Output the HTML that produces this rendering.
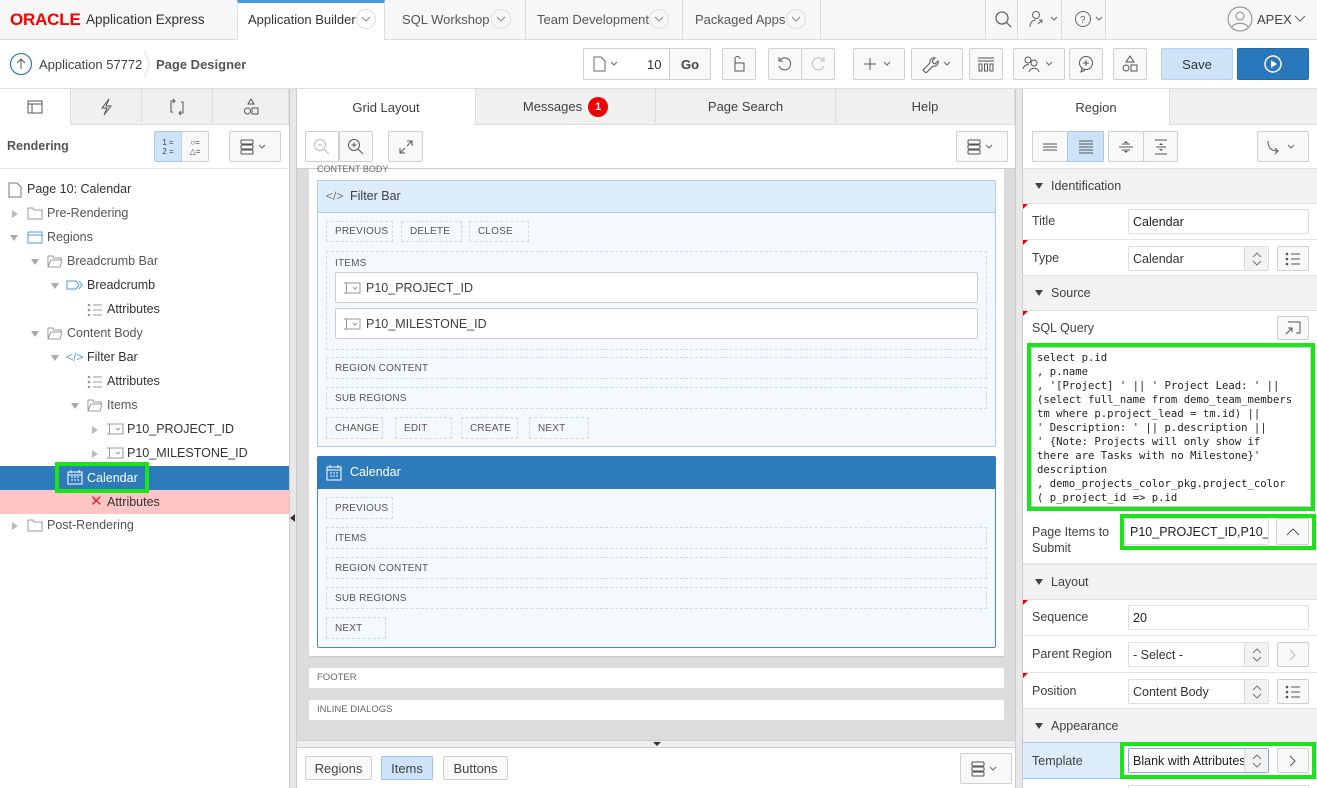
<!DOCTYPE html>
<html style="width:1317px;height:788px;overflow:hidden"><head><meta charset="utf-8"><style>
*{box-sizing:border-box;margin:0;padding:0}
body{width:1317px;height:788px;overflow:hidden;font-family:"Liberation Sans",sans-serif;font-size:13px;color:#404040;background:#fff;position:relative}
.a{position:absolute}
.btn{position:absolute;border:1px solid #d0d0d0;border-radius:2px;background:#f8f8f8;display:flex;align-items:center;justify-content:center;color:#444}
.tab{position:absolute;top:89px;height:36px;background:#f0f0f0;border-right:1px solid #ddd;border-bottom:1px solid #ddd;display:flex;align-items:center;justify-content:center;font-size:13px;color:#404040}
.tree{position:absolute;font-size:12.5px;color:#404040;height:24px;line-height:24px;white-space:nowrap}
.tri{position:absolute;width:0;height:0}
.dn{border-left:4px solid transparent;border-right:4px solid transparent;border-top:6px solid #aaa}
.rt{border-top:4px solid transparent;border-bottom:4px solid transparent;border-left:6px solid #bbb}
.dash{position:absolute;border:1px dashed #c6dcef;font-size:10px;color:#555;padding-left:8px;display:flex;align-items:center;letter-spacing:.2px}
.sec{position:absolute;left:1023px;width:294px;height:36px;background:#f2f2f2;border-bottom:1px solid #e0e0e0;border-top:1px solid #e0e0e0;font-size:12.5px;color:#404040;line-height:34px;padding-left:28px}
.sec:before{content:"";position:absolute;left:12px;top:14px;border-left:4px solid transparent;border-right:4px solid transparent;border-top:6px solid #444}
.lbl{position:absolute;left:1032px;font-size:12.5px;color:#404040}
.inp{position:absolute;border:1px solid #ddd;border-radius:2px;background:#fff;font-size:12.5px;color:#222;padding-left:4px;display:flex;align-items:center;overflow:hidden;white-space:nowrap}
.row{position:absolute;left:1023px;width:294px;border-bottom:1px solid #e4e4e4}
.req{position:absolute;left:1023px;width:0;height:0;border-top:5px solid #e00;border-right:5px solid transparent}
.spin{position:absolute;right:0;top:0;bottom:0;width:24px;border-left:1px solid #ddd;background:#f2f2f2;display:flex;align-items:center;justify-content:center}
.chev{position:absolute;top:9px;width:20px;height:20px;border:1px solid #ddd;border-radius:50%;display:flex;align-items:center;justify-content:center}
</style></head><body>
<!-- top nav -->
<div class="a" style="left:0;top:0;width:1317px;height:40px;background:#f7f7f7;border-bottom:1px solid #ddd"></div>
<div class="a" style="left:10px;top:10px;font-size:17px;font-weight:bold;color:#f80000;letter-spacing:-0.2px">ORACLE</div>
<div class="a" style="left:84px;top:12px;font-size:13.5px;color:#333;padding-left:2px">Application Express</div>
<div class="a" style="left:237px;top:0;width:148px;height:40px;background:#fff;border-top:3px solid #4a9bdc;border-left:1px solid #ddd;border-right:1px solid #ddd"></div>
<div class="a" style="left:248px;top:12px;font-size:13px;color:#333">Application Builder</div>
<div class="chev" style="left:356px"><svg width="10" height="6"><path d="M1 1l4 4 4-4" stroke="#888" fill="none"/></svg></div>
<div class="a" style="left:402px;top:12px;color:#555">SQL Workshop</div>
<div class="chev" style="left:491px"><svg width="10" height="6"><path d="M1 1l4 4 4-4" stroke="#888" fill="none"/></svg></div>
<div class="a" style="left:525px;top:0;width:1px;height:40px;background:#ddd"></div>
<div class="a" style="left:537px;top:12px;color:#555">Team Development</div>
<div class="chev" style="left:649px"><svg width="10" height="6"><path d="M1 1l4 4 4-4" stroke="#888" fill="none"/></svg></div>
<div class="a" style="left:682px;top:0;width:1px;height:40px;background:#ddd"></div>
<div class="a" style="left:695px;top:12px;color:#555">Packaged Apps</div>
<div class="chev" style="left:786px"><svg width="10" height="6"><path d="M1 1l4 4 4-4" stroke="#888" fill="none"/></svg></div>
<div class="a" style="left:820px;top:0;width:1px;height:40px;background:#ddd"></div>
<div class="a" style="left:985px;top:0;width:1px;height:40px;background:#ddd"></div>
<div class="a" style="left:1017px;top:0;width:1px;height:40px;background:#ddd"></div>
<div class="a" style="left:1061px;top:0;width:1px;height:40px;background:#ddd"></div>
<div class="a" style="left:1105px;top:0;width:1px;height:40px;background:#ddd"></div>
<svg class="a" style="left:994px;top:10px" width="20" height="20"><circle cx="8" cy="8" r="6" fill="none" stroke="#666" stroke-width="1.3"/><path d="M12 12l5 5" stroke="#666" stroke-width="1.3"/></svg>
<svg class="a" style="left:1029px;top:10px" width="32" height="20"><circle cx="7" cy="5" r="3.5" fill="none" stroke="#666"/><path d="M1 17c0-5 3-7 6-7M9 14l4-4M10 10h3v3" stroke="#666" fill="none"/><path d="M22 7l3 3 3-3" stroke="#666" fill="none"/></svg>
<svg class="a" style="left:1074px;top:10px" width="32" height="20"><circle cx="9" cy="9" r="7.5" fill="none" stroke="#666"/><text x="6" y="13" font-size="10" fill="#666" font-family="Liberation Sans">?</text><path d="M22 7l3 3 3-3" stroke="#666" fill="none"/></svg>
<svg class="a" style="left:1227px;top:6px" width="26" height="26"><circle cx="13" cy="13" r="12" fill="none" stroke="#888"/><circle cx="13" cy="10" r="4" fill="none" stroke="#888"/><path d="M5 21c2-5 14-5 16 0" fill="none" stroke="#888"/></svg>
<div class="a" style="left:1257px;top:12px;color:#444">APEX</div>
<svg class="a" style="left:1294px;top:15px" width="12" height="8"><path d="M1 1l5 5 5-5" stroke="#666" fill="none"/></svg>

<!-- toolbar row -->
<div class="a" style="left:0;top:88px;width:1317px;height:1px;background:#ddd"></div>
<svg class="a" style="left:9px;top:52px" width="24" height="24"><circle cx="12" cy="12" r="10.5" fill="none" stroke="#2f7bbf" stroke-width="1.2"/><path d="M12 17V7M8 11l4-4 4 4" stroke="#555" fill="none"/></svg>
<div class="a" style="left:39px;top:57px;color:#404040">Application 57772</div>
<svg class="a" style="left:142px;top:50px" width="10" height="28"><path d="M2 1l6 13-6 13" stroke="#ddd" fill="none"/></svg>
<div class="a" style="left:156px;top:57px;color:#555;font-weight:bold">Page Designer</div>
<div class="btn" style="left:583px;top:48px;width:128px;height:32px;justify-content:flex-start;background:#fff"></div>
<svg class="a" style="left:592px;top:56px" width="30" height="16"><path d="M2 1h7l4 4v10H2z" fill="none" stroke="#666"/><path d="M19 6l3 3 3-3" stroke="#666" fill="none"/></svg>
<div class="a" style="left:647px;top:57px;color:#333">10</div>
<div class="btn" style="left:669px;top:48px;width:42px;height:32px;font-weight:bold;background:#f8f8f8">Go</div>
<div class="btn" style="left:722px;top:48px;width:34px;height:32px"><svg width="16" height="18"><rect x="4" y="8" width="9" height="8" fill="none" stroke="#555"/><path d="M4 8V4a2.5 2.5 0 015 0" fill="none" stroke="#555"/></svg></div>
<div class="btn" style="left:768px;top:48px;width:34px;height:32px"><svg width="18" height="18"><path d="M4 5a6 6 0 11-1 6" fill="none" stroke="#555"/><path d="M3 2v4h4" fill="none" stroke="#555"/></svg></div>
<div class="btn" style="left:801px;top:48px;width:34px;height:32px"><svg width="18" height="18"><path d="M14 5a6 6 0 101 6" fill="none" stroke="#bbb"/><path d="M15 2v4h-4" fill="none" stroke="#bbb"/></svg></div>
<div class="btn" style="left:853px;top:48px;width:52px;height:32px"><svg width="34" height="16"><path d="M8 2v12M2 8h12" stroke="#555"/><path d="M22 6l3 3 3-3" stroke="#666" fill="none"/></svg></div>
<div class="btn" style="left:911px;top:48px;width:52px;height:32px"><svg width="34" height="18"><path d="M3 15l7-7a4 4 0 015-5l-3 3 1 2 2 1 3-3a4 4 0 01-5 5l-7 7z" fill="none" stroke="#555"/><path d="M24 7l3 3 3-3" stroke="#666" fill="none"/></svg></div>
<div class="btn" style="left:969px;top:48px;width:34px;height:32px"><svg width="18" height="16"><path d="M1 2h16M1 5h16" stroke="#555"/><rect x="2" y="8" width="3" height="7" fill="none" stroke="#555"/><rect x="7.5" y="8" width="3" height="7" fill="none" stroke="#555"/><rect x="13" y="8" width="3" height="7" fill="none" stroke="#555"/></svg></div>
<div class="btn" style="left:1013px;top:48px;width:52px;height:32px"><svg width="34" height="18"><circle cx="6" cy="5" r="3" fill="none" stroke="#555"/><circle cx="12" cy="8" r="3" fill="none" stroke="#555"/><path d="M1 14c1-4 5-5 6-4M7 17c1-5 9-5 10 0" fill="none" stroke="#555"/><path d="M24 7l3 3 3-3" stroke="#666" fill="none"/></svg></div>
<div class="btn" style="left:1069px;top:48px;width:34px;height:32px"><svg width="18" height="18"><circle cx="9" cy="8" r="6.5" fill="none" stroke="#555"/><path d="M9 5v6M6 8h6M5 13l-1 4 4-2" fill="none" stroke="#555"/></svg></div>
<div class="btn" style="left:1113px;top:48px;width:34px;height:32px"><svg width="18" height="18"><path d="M9 1l4 6H5z" fill="none" stroke="#555"/><circle cx="5" cy="13" r="3" fill="none" stroke="#555"/><rect x="10" y="10" width="6" height="6" fill="none" stroke="#555"/></svg></div>
<div class="btn" style="left:1161px;top:48px;width:72px;height:32px;background:#cde3f7;border-color:#b5d2ee;color:#333">Save</div>
<div class="btn" style="left:1237px;top:48px;width:72px;height:32px;background:#2a78bc;border-color:#2568a6"><svg width="20" height="20"><circle cx="10" cy="10" r="8" fill="none" stroke="#fff" stroke-width="1.5"/><path d="M8 6l6 4-6 4z" fill="#fff"/></svg></div>

<!-- splitters -->
<div class="a" style="left:289px;top:89px;width:8px;height:699px;background:#e8e8e8;border-left:1px solid #ccc;border-right:1px solid #ccc"></div>
<div class="a" style="left:290px;top:514px;border-top:4px solid transparent;border-bottom:4px solid transparent;border-right:5px solid #333"></div>
<div class="a" style="left:1015px;top:89px;width:8px;height:699px;background:#e8e8e8;border-left:1px solid #ccc;border-right:1px solid #ccc"></div>

<!-- left panel -->
<div class="tab" style="left:0;width:71px;background:#fff;border-bottom:none"><svg width="16" height="14"><rect x="1" y="1" width="14" height="12" fill="none" stroke="#555"/><path d="M1 4h14M5 4v9" stroke="#555"/></svg></div>
<div class="tab" style="left:71px;width:71px"><svg width="14" height="18"><path d="M10 1L3 10h5l-3 7 7-9H7z" fill="none" stroke="#555"/></svg></div>
<div class="tab" style="left:142px;width:71px"><svg width="18" height="18"><path d="M6 3H3v11h2M12 15h3V4h-2" fill="none" stroke="#555"/><path d="M5 1l2 2-2 2M13 13l-2 2 2 2" fill="none" stroke="#555"/></svg></div>
<div class="tab" style="left:213px;width:76px"><svg width="16" height="18"><path d="M8 1l3 5H5z" fill="none" stroke="#555"/><circle cx="4.5" cy="13" r="3" fill="none" stroke="#555"/><rect x="9" y="10" width="6" height="6" fill="none" stroke="#555"/></svg></div>
<div class="a" style="left:7px;top:139px;font-weight:bold;color:#555;font-size:12.5px">Rendering</div>
<div class="btn" style="left:154px;top:131px;width:28px;height:31px;background:#cde3f7;border-color:#a9c9ea;border-radius:2px 0 0 2px;font-size:8px;line-height:9px;text-align:center">1 =<br>2 =</div>
<div class="btn" style="left:181px;top:131px;width:28px;height:31px;font-size:8px;line-height:9px;text-align:center">○=<br>△=</div>
<div class="btn" style="left:229px;top:131px;width:52px;height:31px"><svg width="34" height="16"><rect x="3" y="1" width="12" height="4" rx="1" fill="none" stroke="#555"/><rect x="3" y="6" width="12" height="4" rx="1" fill="none" stroke="#555"/><rect x="3" y="11" width="12" height="4" rx="1" fill="none" stroke="#555"/><path d="M21 6l3 3 3-3" stroke="#666" fill="none"/></svg></div>
<div class="a" style="left:0;top:168px;width:289px;height:1px;background:#e6e6e6"></div>

<div class="a" style="left:0;top:466px;width:289px;height:24px;background:#2e7bbc"></div>
<div class="a" style="left:0;top:490px;width:289px;height:24px;background:#ffc4c4"></div>

<svg class="a" style="left:8px;top:182px" width="14" height="16"><path d="M1 1h8l4 4v10H1z" fill="none" stroke="#777"/></svg>
<div class="tree" style="left:27px;top:177px;color:#333">Page 10: Calendar</div>
<div class="tri rt" style="left:12px;top:210px"></div>
<svg class="a" style="left:27px;top:207px" width="16" height="13"><path d="M1 1h5l1 2h8v9H1z" fill="none" stroke="#999"/></svg>
<div class="tree" style="left:47px;top:201px;color:#555">Pre-Rendering</div>
<div class="tri dn" style="left:10px;top:235px"></div>
<svg class="a" style="left:27px;top:231px" width="16" height="13"><rect x="1" y="1" width="14" height="11" fill="none" stroke="#4a9bdc"/><path d="M1 4h14" stroke="#4a9bdc"/></svg>
<div class="tree" style="left:47px;top:225px;color:#555">Regions</div>
<div class="tri dn" style="left:31px;top:259px"></div>
<svg class="a" style="left:47px;top:255px" width="16" height="13"><path d="M1 1h5l1 2h7v2M1 1v11h12l2-7H4l-3 7" fill="none" stroke="#999"/></svg>
<div class="tree" style="left:67px;top:249px;color:#555">Breadcrumb Bar</div>
<div class="tri dn" style="left:51px;top:283px"></div>
<svg class="a" style="left:66px;top:280px" width="18" height="10"><path d="M1 1h9l3 4-3 4H1z" fill="none" stroke="#4a9bdc"/><path d="M13 1l3 4-3 4" fill="none" stroke="#4a9bdc"/></svg>
<div class="tree" style="left:87px;top:273px;color:#333">Breadcrumb</div>
<svg class="a" style="left:87px;top:303px" width="16" height="14"><circle cx="2" cy="2" r="1.3" fill="#999"/><circle cx="2" cy="7" r="1.3" fill="#999"/><circle cx="2" cy="12" r="1.3" fill="#999"/><path d="M6 2h9M6 7h9M6 12h9" stroke="#999"/></svg>
<div class="tree" style="left:107px;top:297px;color:#333">Attributes</div>
<div class="tri dn" style="left:31px;top:331px"></div>
<svg class="a" style="left:47px;top:327px" width="16" height="13"><path d="M1 1h5l1 2h7v2M1 1v11h12l2-7H4l-3 7" fill="none" stroke="#999"/></svg>
<div class="tree" style="left:67px;top:321px;color:#555">Content Body</div>
<div class="tri dn" style="left:51px;top:355px"></div>
<div class="tree" style="left:66px;top:345px;color:#4a9bdc;font-size:12px">&lt;/&gt;</div>
<div class="tree" style="left:87px;top:345px;color:#333">Filter Bar</div>
<svg class="a" style="left:87px;top:375px" width="16" height="14"><circle cx="2" cy="2" r="1.3" fill="#999"/><circle cx="2" cy="7" r="1.3" fill="#999"/><circle cx="2" cy="12" r="1.3" fill="#999"/><path d="M6 2h9M6 7h9M6 12h9" stroke="#999"/></svg>
<div class="tree" style="left:107px;top:369px;color:#333">Attributes</div>
<div class="tri dn" style="left:71px;top:403px"></div>
<svg class="a" style="left:87px;top:399px" width="16" height="13"><path d="M1 1h5l1 2h7v2M1 1v11h12l2-7H4l-3 7" fill="none" stroke="#999"/></svg>
<div class="tree" style="left:107px;top:393px;color:#555">Items</div>
<div class="tri rt" style="left:92px;top:426px"></div>
<svg class="a" style="left:106px;top:423px" width="18" height="12"><path d="M1 1h5M3.5 1v10M1 11h5M6 1h11v10H6" fill="none" stroke="#999"/><path d="M10 5l2 2 2-2" fill="none" stroke="#999"/></svg>
<div class="tree" style="left:127px;top:417px;color:#333">P10_PROJECT_ID</div>
<div class="tri rt" style="left:92px;top:450px"></div>
<svg class="a" style="left:106px;top:447px" width="18" height="12"><path d="M1 1h5M3.5 1v10M1 11h5M6 1h11v10H6" fill="none" stroke="#999"/><path d="M10 5l2 2 2-2" fill="none" stroke="#999"/></svg>
<div class="tree" style="left:127px;top:441px;color:#333">P10_MILESTONE_ID</div>
<div class="a" style="left:55px;top:462px;width:94px;height:31px;border:4px solid #1de31d"></div>
<svg class="a" style="left:67px;top:469px" width="16" height="16"><rect x="1" y="3" width="14" height="12" fill="none" stroke="#fff"/><path d="M1 6h14M4 1v3M12 1v3" stroke="#fff"/><path d="M4 8h2M7 8h2M10 8h2M4 11h2M7 11h2M10 11h2" stroke="#fff"/></svg>
<div class="tree" style="left:87px;top:466px;color:#fff">Calendar</div>
<div class="tree" style="left:90px;top:490px;color:#e22;font-size:15px">✕</div>
<div class="tree" style="left:107px;top:490px;color:#333">Attributes</div>
<div class="tri rt" style="left:12px;top:522px"></div>
<svg class="a" style="left:27px;top:519px" width="16" height="13"><path d="M1 1h5l1 2h8v9H1z" fill="none" stroke="#999"/></svg>
<div class="tree" style="left:47px;top:513px;color:#555">Post-Rendering</div>

<!-- center -->
<div class="tab" style="left:297px;width:179px;background:#fff;border-bottom:none">Grid Layout</div>
<div class="tab" style="left:476px;width:180px">Messages<span style="display:inline-block;margin-left:6px;width:20px;height:20px;border-radius:50%;background:#e00;color:#fff;font-size:11px;font-weight:bold;text-align:center;line-height:20px">1</span></div>
<div class="tab" style="left:656px;width:180px">Page Search</div>
<div class="tab" style="left:836px;width:179px">Help</div>
<div class="btn" style="left:305px;top:131px;width:34px;height:31px;background:#fff"><svg width="18" height="18"><circle cx="7" cy="7" r="5.5" fill="none" stroke="#bbb"/><path d="M11 11l5 5M4.5 7h5" stroke="#bbb"/></svg></div>
<div class="btn" style="left:339px;top:131px;width:34px;height:31px"><svg width="18" height="18"><circle cx="7" cy="7" r="5.5" fill="none" stroke="#555"/><path d="M11 11l5 5M4.5 7h5M7 4.5v5" stroke="#555"/></svg></div>
<div class="btn" style="left:388px;top:131px;width:35px;height:31px"><svg width="16" height="16"><path d="M2 14l5-5M2 9v5h5M14 2l-5 5M9 2h5v5" fill="none" stroke="#555"/></svg></div>
<div class="btn" style="left:956px;top:131px;width:52px;height:31px"><svg width="34" height="16"><rect x="3" y="1" width="12" height="4" rx="1" fill="none" stroke="#555"/><rect x="3" y="6" width="12" height="4" rx="1" fill="none" stroke="#555"/><rect x="3" y="11" width="12" height="4" rx="1" fill="none" stroke="#555"/><path d="M21 6l3 3 3-3" stroke="#666" fill="none"/></svg></div>

<div class="a" style="left:297px;top:168px;width:718px;height:572px;background:#dcdcdc;border-top:1px solid #ccc"></div>
<div class="a" style="left:309px;top:169px;width:695px;height:487px;background:#fff;border-radius:0 0 2px 2px;box-shadow:0 1px 1px rgba(0,0,0,.1)"></div>
<div class="a" style="left:317px;top:164px;font-size:9px;color:#666">CONTENT BODY</div>
<div class="a" style="left:317px;top:180px;width:679px;height:267px;background:#f5f9fd;border:1px solid #a9cdee;border-radius:2px"></div>
<div class="a" style="left:318px;top:181px;width:677px;height:32px;background:#ddecf9;border-bottom:1px solid #a9cdee"></div>
<div class="a" style="left:326px;top:189px;font-size:12px;color:#777">&lt;/&gt;</div>
<div class="a" style="left:350px;top:189px;font-size:12.5px;color:#404040">Filter Bar</div>
<div class="dash" style="left:326px;top:221px;width:67px;height:21px">PREVIOUS</div>
<div class="dash" style="left:401px;top:221px;width:61px;height:21px">DELETE</div>
<div class="dash" style="left:469px;top:221px;width:60px;height:21px">CLOSE</div>
<div class="dash" style="left:326px;top:251px;width:661px;height:99px;align-items:flex-start;padding-top:6px">ITEMS</div>
<div class="a" style="left:335px;top:272px;width:643px;height:31px;background:#fff;border:1px solid #ccc;border-radius:2px"></div>
<div class="a" style="left:335px;top:308px;width:643px;height:31px;background:#fff;border:1px solid #ccc;border-radius:2px"></div>
<svg class="a" style="left:343px;top:282px" width="18" height="12"><path d="M1 1h5M3.5 1v10M1 11h5M6 1h11v10H6" fill="none" stroke="#999"/><path d="M10 5l2 2 2-2" fill="none" stroke="#999"/></svg>
<div class="a" style="left:366px;top:281px;font-size:12.5px;color:#404040">P10_PROJECT_ID</div>
<svg class="a" style="left:343px;top:318px" width="18" height="12"><path d="M1 1h5M3.5 1v10M1 11h5M6 1h11v10H6" fill="none" stroke="#999"/><path d="M10 5l2 2 2-2" fill="none" stroke="#999"/></svg>
<div class="a" style="left:366px;top:317px;font-size:12.5px;color:#404040">P10_MILESTONE_ID</div>
<div class="dash" style="left:326px;top:357px;width:661px;height:22px">REGION CONTENT</div>
<div class="dash" style="left:326px;top:387px;width:661px;height:22px">SUB REGIONS</div>
<div class="dash" style="left:326px;top:417px;width:57px;height:22px">CHANGE</div>
<div class="dash" style="left:395px;top:417px;width:57px;height:22px">EDIT</div>
<div class="dash" style="left:461px;top:417px;width:57px;height:22px">CREATE</div>
<div class="dash" style="left:529px;top:417px;width:60px;height:22px">NEXT</div>

<div class="a" style="left:317px;top:456px;width:679px;height:192px;background:#f5f9fd;border:1px solid #3f8ad0;border-radius:2px"></div>
<div class="a" style="left:317px;top:456px;width:679px;height:33px;background:#2e7bbc;border-radius:2px 2px 0 0"></div>
<svg class="a" style="left:326px;top:464px" width="16" height="17"><rect x="1" y="3" width="14" height="13" fill="none" stroke="#fff"/><path d="M1 6h14M4 1v3M12 1v3" stroke="#fff"/><path d="M4 9h2M7 9h2M10 9h2M4 12h2M7 12h2M10 12h2" stroke="#fff"/></svg>
<div class="a" style="left:350px;top:465px;font-size:12.5px;color:#fff">Calendar</div>
<div class="dash" style="left:326px;top:497px;width:67px;height:22px">PREVIOUS</div>
<div class="dash" style="left:326px;top:527px;width:661px;height:22px">ITEMS</div>
<div class="dash" style="left:326px;top:557px;width:661px;height:22px">REGION CONTENT</div>
<div class="dash" style="left:326px;top:587px;width:661px;height:22px">SUB REGIONS</div>
<div class="dash" style="left:326px;top:617px;width:60px;height:22px">NEXT</div>

<div class="a" style="left:309px;top:668px;width:695px;height:20px;background:#fff;border-radius:2px;font-size:9.5px;color:#666;padding-left:8px;line-height:20px">FOOTER</div>
<div class="a" style="left:309px;top:700px;width:695px;height:20px;background:#fff;border-radius:2px;font-size:9.5px;color:#666;padding-left:8px;line-height:20px">INLINE DIALOGS</div>
<div class="a" style="left:297px;top:740px;width:718px;height:8px;background:#eee;border-top:1px solid #ccc;border-bottom:1px solid #ccc"></div>
<div class="a" style="left:653px;top:742px;border-left:4px solid transparent;border-right:4px solid transparent;border-top:4px solid #333"></div>
<div class="btn" style="left:305px;top:756px;width:67px;height:24px">Regions</div>
<div class="btn" style="left:381px;top:756px;width:52px;height:24px;background:#cde3f7;border-color:#9fc3e6">Items</div>
<div class="btn" style="left:443px;top:756px;width:65px;height:24px">Buttons</div>
<div class="btn" style="left:960px;top:753px;width:52px;height:31px"><svg width="34" height="16"><rect x="3" y="1" width="12" height="4" rx="1" fill="none" stroke="#555"/><rect x="3" y="6" width="12" height="4" rx="1" fill="none" stroke="#555"/><rect x="3" y="11" width="12" height="4" rx="1" fill="none" stroke="#555"/><path d="M21 6l3 3 3-3" stroke="#666" fill="none"/></svg></div>

<!-- right panel -->
<div class="tab" style="left:1023px;width:147px;background:#fff;border-bottom:none">Region</div>
<div class="a" style="left:1170px;top:89px;width:147px;height:36px;background:#f0f0f0;border-bottom:1px solid #ddd"></div>
<div class="btn" style="left:1032px;top:131px;width:36px;height:31px"><svg width="16" height="12"><path d="M1 3h14M1 6h14M1 9h14" stroke="#555"/></svg></div>
<div class="btn" style="left:1067px;top:131px;width:37px;height:31px;background:#cde3f7;border-color:#a9c9ea"><svg width="16" height="14"><path d="M1 1h14M1 4h14M1 7h14M1 10h14M1 13h14" stroke="#555"/></svg></div>
<div class="btn" style="left:1108px;top:131px;width:36px;height:31px"><svg width="16" height="16"><path d="M1 8h14M4 5h8M4 11h8" stroke="#555"/><path d="M8 2l-2 2h4zM8 14l-2-2h4z" fill="#555"/></svg></div>
<div class="btn" style="left:1143px;top:131px;width:35px;height:31px"><svg width="16" height="16"><path d="M2 1h12M2 15h12M3 8h10" stroke="#555"/><path d="M8 4l-2 2h4zM8 12l-2-2h4z" fill="#555"/></svg></div>
<div class="btn" style="left:1257px;top:131px;width:52px;height:31px"><svg width="34" height="16"><path d="M2 2c0 7 3 10 10 10M9 9l3 3-3 3" fill="none" stroke="#555"/><path d="M22 6l3 3 3-3" stroke="#666" fill="none"/></svg></div>
<div class="a" style="left:1023px;top:168px;width:294px;height:1px;background:#ddd"></div>

<div class="sec" style="top:168px">Identification</div>
<div class="row" style="top:204px;height:36px"></div><div class="req" style="top:204px"></div>
<div class="lbl" style="top:214px">Title</div>
<div class="inp" style="left:1128px;top:209px;width:181px;height:25px">Calendar</div>
<div class="row" style="top:240px;height:37px"></div><div class="req" style="top:240px"></div>
<div class="lbl" style="top:251px">Type</div>
<div class="inp" style="left:1128px;top:246px;width:141px;height:25px;color:#333">Calendar<div class="spin"><svg width="10" height="14"><path d="M1 5l4-4 4 4M1 9l4 4 4-4" stroke="#777" fill="none"/></svg></div></div>
<div class="btn" style="left:1277px;top:246px;width:32px;height:25px"><svg width="16" height="14"><circle cx="2" cy="2" r="1.3" fill="#555"/><circle cx="2" cy="7" r="1.3" fill="#555"/><circle cx="2" cy="12" r="1.3" fill="#555"/><path d="M6 2h9M6 7h9M6 12h9" stroke="#555"/></svg></div>
<div class="sec" style="top:275px">Source</div>
<div class="req" style="top:311px"></div>
<div class="lbl" style="top:321px">SQL Query</div>
<div class="btn" style="left:1277px;top:316px;width:32px;height:24px"><svg width="16" height="14"><path d="M3 1h12v11h-4M1 13l6-6M3 7h4v4" fill="none" stroke="#555"/></svg></div>
<div class="a" style="left:1027px;top:343px;width:288px;height:168px;border:4px solid #1de31d"></div>
<div class="a" style="left:1031px;top:347px;width:280px;height:160px;background:#fff;border:1px solid #ccc;font-family:'DejaVu Sans Mono','Liberation Mono',monospace;font-size:10.6px;line-height:14px;padding:3px 0 0 5px;white-space:pre;color:#222;overflow:hidden">select p.id
, p.name
, '[Project] ' || ' Project Lead: ' ||
(select full_name from demo_team_members
tm where p.project_lead = tm.id) ||
' Description: ' || p.description ||
' {Note: Projects will only show if
there are Tasks with no Milestone}'
description
, demo_projects_color_pkg.project_color
( p_project_id =&gt; p.id</div>
<div class="row" style="top:513px;height:51px"></div>
<div class="lbl" style="top:524px;line-height:16px">Page Items to<br>Submit</div>
<div class="a" style="left:1120px;top:514px;width:196px;height:36px;border:4px solid #1de31d"></div>
<div class="inp" style="left:1125px;top:518px;width:144px;height:27px">P10_PROJECT_ID,P10_MI</div>
<div class="btn" style="left:1276px;top:518px;width:33px;height:27px"><svg width="14" height="8"><path d="M1 7l6-6 6 6" stroke="#555" fill="none"/></svg></div>
<div class="sec" style="top:564px">Layout</div>
<div class="row" style="top:600px;height:36px"></div><div class="req" style="top:600px"></div>
<div class="lbl" style="top:610px">Sequence</div>
<div class="inp" style="left:1128px;top:605px;width:181px;height:25px">20</div>
<div class="row" style="top:636px;height:37px"></div>
<div class="lbl" style="top:647px">Parent Region</div>
<div class="inp" style="left:1128px;top:642px;width:141px;height:25px;color:#333">- Select -<div class="spin"><svg width="10" height="14"><path d="M1 5l4-4 4 4M1 9l4 4 4-4" stroke="#777" fill="none"/></svg></div></div>
<div class="btn" style="left:1277px;top:642px;width:32px;height:25px"><svg width="8" height="12"><path d="M1 1l5 5-5 5" stroke="#bbb" fill="none"/></svg></div>
<div class="row" style="top:673px;height:36px"></div><div class="req" style="top:673px"></div>
<div class="lbl" style="top:684px">Position</div>
<div class="inp" style="left:1128px;top:679px;width:141px;height:25px;color:#333">Content Body<div class="spin"><svg width="10" height="14"><path d="M1 5l4-4 4 4M1 9l4 4 4-4" stroke="#777" fill="none"/></svg></div></div>
<div class="btn" style="left:1277px;top:679px;width:32px;height:25px"><svg width="16" height="14"><circle cx="2" cy="2" r="1.3" fill="#555"/><circle cx="2" cy="7" r="1.3" fill="#555"/><circle cx="2" cy="12" r="1.3" fill="#555"/><path d="M6 2h9M6 7h9M6 12h9" stroke="#555"/></svg></div>
<div class="sec" style="top:708px">Appearance</div>
<div class="a" style="left:1023px;top:742px;width:294px;height:37px;background:#ddecf9;border-top:1px solid #9fc3e6;border-bottom:1px solid #9fc3e6"></div>
<div class="lbl" style="top:754px">Template</div>
<div class="a" style="left:1120px;top:742px;width:196px;height:37px;border:4px solid #1de31d;background:#fff"></div>
<div class="inp" style="left:1128px;top:748px;width:141px;height:25px;border-color:#7fb0de">Blank with Attributes<div class="spin"><svg width="10" height="14"><path d="M1 5l4-4 4 4M1 9l4 4 4-4" stroke="#777" fill="none"/></svg></div></div>
<div class="btn" style="left:1277px;top:748px;width:32px;height:25px"><svg width="8" height="12"><path d="M1 1l5 5-5 5" stroke="#555" fill="none"/></svg></div>
<div class="a" style="left:1128px;top:785px;width:181px;height:3px;border:1px solid #ddd;border-bottom:none"></div>
</body></html>
